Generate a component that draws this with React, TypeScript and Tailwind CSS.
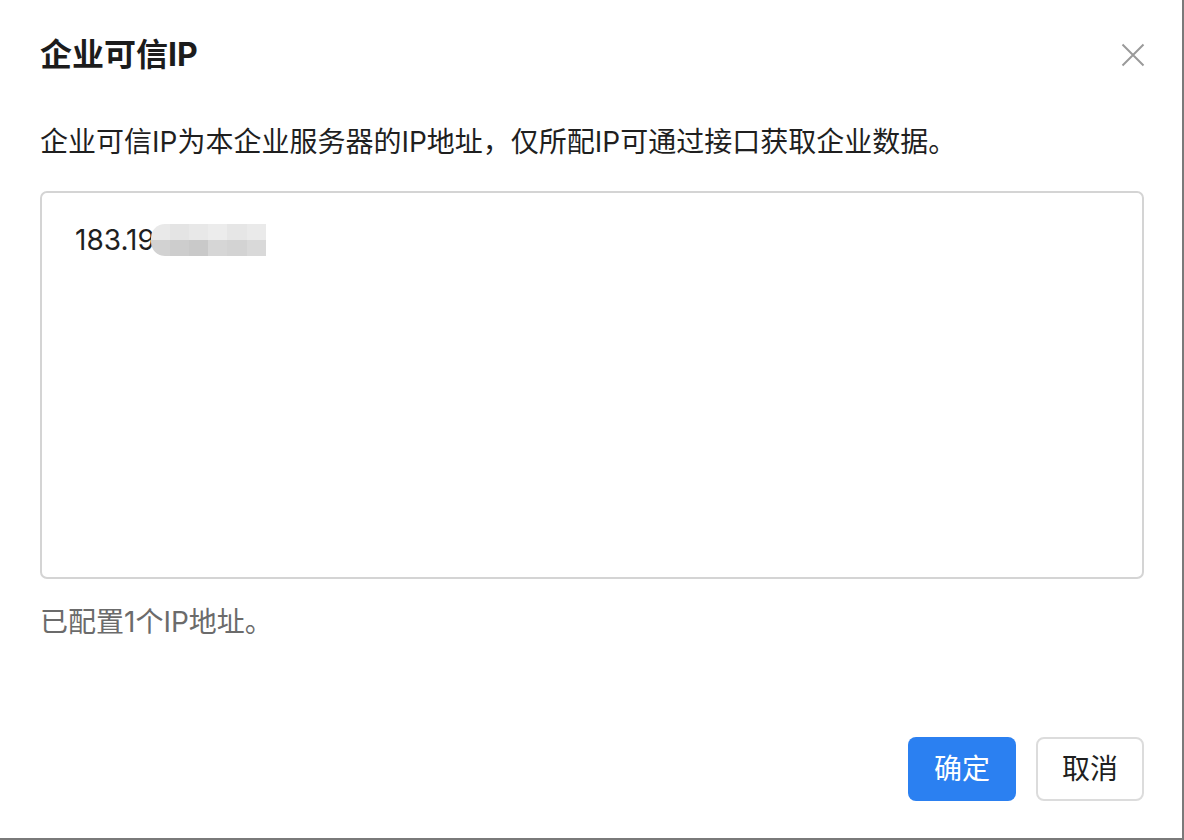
const blurTop = ['#e9e9e9', '#e4e4e4', '#e8e8e8', '#ececec', '#e6e6e6', '#eaeaea'];
const blurBottom = ['#d2d2d2', '#cdcdcd', '#c9c9c9', '#d6d6d6', '#d3d3d3', '#d9d9d9'];

function MaskedIp() {
  return (
    <span className="ml-[-4px] inline-flex h-[32px] w-[115px] flex-col overflow-hidden rounded-l-[14px] align-middle">
      <span className="flex h-1/2">
        {blurTop.map((c, i) => (
          <span key={i} className="h-full flex-1" style={{ backgroundColor: c }} />
        ))}
      </span>
      <span className="flex h-1/2">
        {blurBottom.map((c, i) => (
          <span key={i} className="h-full flex-1" style={{ backgroundColor: c }} />
        ))}
      </span>
    </span>
  );
}

export default function App() {
  return (
    <div
      className="box-border flex h-[840px] w-[1184px] flex-col border-b-2 border-r-2 border-[#7a7a7a] bg-white pl-10 pr-[38px]"
      style={{ fontFamily: 'Inter, "Noto Sans CJK SC", sans-serif' }}
    >
      <div className="flex items-center justify-between pt-[33px]">
        <h2 className="text-[32px] font-bold leading-[44px] text-[#1c1c1c]">企业可信IP</h2>
        <button type="button" aria-label="Close" className="mr-[-1px] flex h-[24px] w-[24px] items-center justify-center">
          <svg width="24" height="24" viewBox="0 0 24 24" fill="none" stroke="#9a9a9a" strokeWidth="2">
            <path d="M1.5 1.5 L22.5 22.5 M22.5 1.5 L1.5 22.5" />
          </svg>
        </button>
      </div>

      <p className="mt-[45px] text-[28px] leading-[40px] text-[#1f1f1f]">
        企业可信IP为本企业服务器的IP地址，仅所配IP可通过接口获取企业数据。
      </p>

      <div className="mt-[29px] box-border h-[388px] w-full rounded-[7px] border-2 border-[#d4d4d4] pl-[33px] pt-[27px]">
        <div className="flex items-center text-[28px] leading-[40px] text-[#1f1f1f]">
          <span>183.19</span>
          <MaskedIp />
        </div>
      </div>

      <p className="mt-[23px] text-[28px] leading-[40px] text-[#6b6b6b]">已配置1个IP地址。</p>

      <div className="mt-[95px] flex justify-end gap-5">
        <button
          type="button"
          className="h-[64px] w-[108px] rounded-lg bg-[#2b80f1] text-[28px] text-white"
        >
          确定
        </button>
        <button
          type="button"
          className="box-border h-[64px] w-[108px] rounded-lg border-2 border-[#dcdcdc] bg-white text-[28px] text-[#1f1f1f]"
        >
          取消
        </button>
      </div>
    </div>
  );
}
